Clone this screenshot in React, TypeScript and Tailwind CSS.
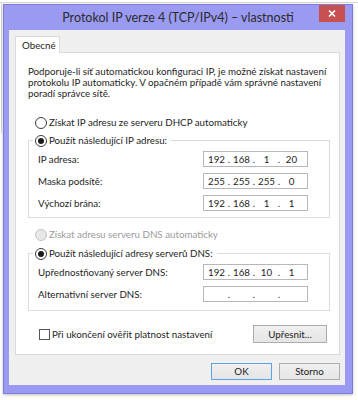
import React from 'react';

const Radio: React.FC<{ checked?: boolean; disabled?: boolean }> = ({ checked, disabled }) => (
  <span
    className={`w-[12px] h-[12px] shrink-0 rounded-full border flex items-center justify-center ${
      disabled ? 'border-[#c2c2c2] bg-[#e8e8e8]' : 'border-[#3c3c3c] bg-white'
    }`}
  >
    {checked && <span className="w-[6px] h-[6px] rounded-full bg-[#1c1c1c]" />}
  </span>
);

const IpField: React.FC<{ value?: string[] }> = ({ value }) => (
  <div className="w-[105px] h-[16px] shrink-0 border border-[#b5b7bd] bg-white flex items-center pl-[2px]">
    {[0, 1, 2, 3].map((i) => (
      <React.Fragment key={i}>
        <span className="w-[21px] text-center">{value?.[i] ?? ''}</span>
        {i < 3 && <span className="w-[4px] text-center">.</span>}
      </React.Fragment>
    ))}
  </div>
);

const FieldRow: React.FC<{ label: string; value?: string[] }> = ({ label, value }) => (
  <div className="flex items-center justify-between h-[16px]">
    <span className="whitespace-nowrap">{label}</span>
    <IpField value={value} />
  </div>
);

const GroupBox: React.FC<{ title: string; children: React.ReactNode; className?: string }> = ({ title, children, className }) => (
  <div className={`border border-[#dcdcdc] ${className ?? ''}`}>
    <div className="-mt-[7px] ml-[4px] w-fit bg-white px-[2px] pr-[4px] h-[13px] flex items-center gap-[2px] whitespace-nowrap">
      <Radio checked />
      <span>{title}</span>
    </div>
    <div className="mt-[4px] pl-[9px] pr-[21px] flex flex-col gap-[6px]">{children}</div>
  </div>
);

const Button: React.FC<{ children: React.ReactNode; primary?: boolean; className?: string }> = ({ children, primary, className }) => (
  <button
    className={`flex items-center justify-center border bg-gradient-to-b from-[#f0f0f0] to-[#e5e5e5] text-[#1c1c1c] ${
      primary ? 'border-[#5fa3e6]' : 'border-[#adadad]'
    } ${className ?? ''}`}
  >
    {children}
  </button>
);

export default function App() {
  return (
    <div className="relative w-[358px] h-[400px] bg-white overflow-hidden font-['Segoe_UI',Lato,'Liberation_Sans',sans-serif] text-[9.75px] text-[#1e1e1e]">
      {/* bits of the window behind */}
      <div className="h-[3px] border-b border-[#d6d6d6]" />
      <div className="ml-[1px] w-px h-[130px] bg-[#dadada]" />

      <div className="absolute left-[3px] top-[4px] w-[350px] h-[390px] bg-[#9a9af2] border border-[#7d7dd8] shadow-[0_1px_3px_rgba(0,0,0,0.25)]">
        <div className="grid grid-cols-[1fr_auto_1fr] h-[25px]">
          <div />
          <div className="self-center pt-[1px] text-[12.5px] text-[#2b2b2b] whitespace-nowrap">
            Protokol IP verze 4 (TCP/IPv4) – vlastnosti
          </div>
          <div className="flex justify-end pr-[7px]">
            <div className="w-[26px] h-[17px] bg-[#c75050] flex items-center justify-center">
              <svg width="8" height="7" viewBox="0 0 8 7">
                <path d="M1 0.5 L7 6.5 M7 0.5 L1 6.5" stroke="white" strokeWidth="1.6" />
              </svg>
            </div>
          </div>
        </div>

        <div className="ml-[5px] w-[336px] h-[355px] bg-[#f0f0f0] pt-[6px] pl-[6px]">
          <div className="relative z-10 -mb-px w-[45px] h-[17px] bg-white border border-b-0 border-[#d9d9d9] pl-[6px] flex items-center">
            Obecné
          </div>
          <div className="w-[325px] bg-white border border-[#d9d9d9] pt-[13px] pl-[12px] pr-[9px] pb-[11px]">
            <p className="leading-[11px] whitespace-nowrap">
              Podporuje-li síť automatickou konfiguraci IP, je možné získat nastavení
              <br />
              protokolu IP automaticky. V opačném případě vám správné nastavení
              <br />
              poradí správce sítě.
            </p>

            <div className="mt-[17px] pl-[7px] h-[13px] flex items-center gap-[2px] whitespace-nowrap">
              <Radio />
              <span>Získat IP adresu ze serveru DHCP automaticky</span>
            </div>

            <GroupBox title="Použít následující IP adresu:" className="mt-[11px] pb-[6px]">
              <FieldRow label="IP adresa:" value={['192', '168', '1', '20']} />
              <FieldRow label="Maska podsítě:" value={['255', '255', '255', '0']} />
              <FieldRow label="Výchozí brána:" value={['192', '168', '1', '1']} />
            </GroupBox>

            <div className="mt-[10px] pl-[7px] h-[13px] flex items-center gap-[2px] whitespace-nowrap text-[#9b9b9b]">
              <Radio disabled />
              <span>Získat adresu serveru DNS automaticky</span>
            </div>

            <GroupBox title="Použít následující adresy serverů DNS:" className="mt-[12px] pb-[8px]">
              <FieldRow label="Upřednostňovaný server DNS:" value={['192', '168', '10', '1']} />
              <FieldRow label="Alternativní server DNS:" />
            </GroupBox>

            <div className="mt-[14px] h-[18px] flex items-center justify-between pl-[11px] pr-[3px]">
              <div className="flex items-center gap-[2px] whitespace-nowrap">
                <span className="w-[11px] h-[11px] border border-[#555] bg-white" />
                <span>Při ukončení ověřit platnost nastavení</span>
              </div>
              <Button className="w-[74px] h-[18px]">Upřesnit...</Button>
            </div>
          </div>

          <div className="mt-[8px] w-[325px] flex justify-end gap-[7px]">
            <Button primary className="w-[61px] h-[17px]">OK</Button>
            <Button className="w-[61px] h-[17px]">Storno</Button>
          </div>
        </div>
      </div>
    </div>
  );
}
